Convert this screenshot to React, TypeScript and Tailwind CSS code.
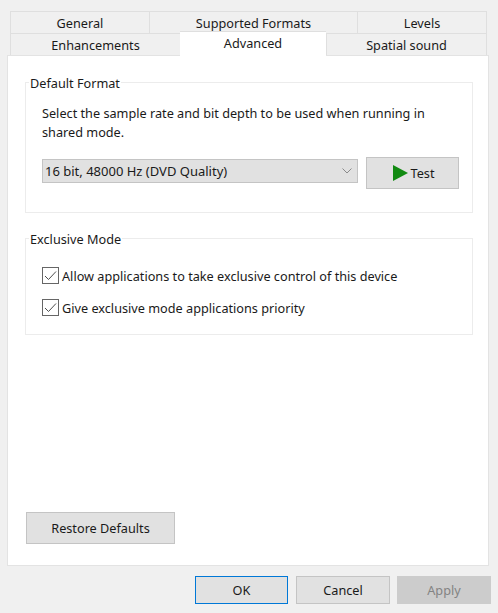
import React from "react";

const font = { fontFamily: '"Noto Sans", sans-serif' };

function Check({ label }: { label: string }) {
  return (
    <div className="flex items-center h-[17px] gap-[3px]">
      <div className="w-[17px] h-[17px] border border-[#666666] flex items-center justify-center bg-white">
        <svg width="15" height="15" viewBox="0 0 15 15" fill="none">
          <path d="M2 8 L5.5 11.5 L13 3.5" stroke="#4d4d4d" strokeWidth="1" />
        </svg>
      </div>
      <span className="whitespace-nowrap">{label}</span>
    </div>
  );
}

function Btn({ label, cls }: { label: string; cls: string }) {
  return <div className={"flex items-center justify-center " + cls}>{label}</div>;
}

export default function App() {
  return (
    <div className="w-[498px] h-[613px] bg-[#f0f0f0] text-[12.7px] leading-[18px] text-[#1a1a1a] overflow-hidden flex flex-col" style={font}>
      <div className="pt-[11px] pl-[10px] w-[487px]">
        <div className="flex h-[22px] border-t border-[#dfdfdf] border-l border-r">
          <div className="w-[139px] flex items-center justify-center border-r border-[#dfdfdf]">General</div>
          <div className="w-[208px] flex items-center justify-center border-r border-[#dfdfdf]">Supported Formats</div>
          <div className="flex-1 flex items-center justify-center">Levels</div>
        </div>
        <div className="flex h-[22px] border-t border-[#dfdfdf] border-l border-r">
          <div className="w-[169px] flex items-center justify-center">Enhancements</div>
          <div className="w-[146px] h-[25px] -mt-[3px] bg-white flex items-center justify-center border-t border-[#dfdfdf] relative pb-[2px]">Advanced</div>
          <div className="flex-1 flex items-center justify-center border-l border-[#dfdfdf]">Spatial sound</div>
        </div>
      </div>
      <div className="ml-[7px] w-[482px] h-[511px] bg-white border border-[#e3e3e3] pt-[26px] pl-[17px] pr-[16px] flex flex-col">
        <div className="relative w-[448px] h-[131px] border border-[#ececec] pt-[21px] pl-[16px]">
          <div className="absolute left-[3px] -top-[8px] bg-white px-[1px] leading-[16px]">Default Format</div>
          <div className="w-[395px] leading-[19px]">Select the sample rate and bit depth to be used when running in shared mode.</div>
          <div className="flex items-start gap-[8px] mt-[15px]">
            <div className="w-[316px] h-[24px] mt-[2px] bg-[#e1e1e1] border border-[#c4c4c4] flex items-center justify-between pl-[2px] pr-[5px]">
              <span className="text-[13px]">16 bit, 48000 Hz (DVD Quality)</span>
              <svg width="10" height="6" viewBox="0 0 10 6" fill="none">
                <path d="M0.5 0.5 L5 5 L9.5 0.5" stroke="#8a8a8a" strokeWidth="1" />
              </svg>
            </div>
            <div className="w-[93px] h-[32px] bg-[#e1e1e1] border border-[#c4c4c4] flex items-center justify-center gap-[3px] pl-[2px]">
              <svg width="15" height="16" viewBox="0 0 15 16">
                <path d="M0 0 L15 8 L0 16 Z" fill="#118a11" />
              </svg>
              <span>Test</span>
            </div>
          </div>
        </div>
        <div className="relative w-[448px] h-[97px] mt-[25px] border border-[#ececec] pt-[28px] pl-[16px] flex flex-col gap-[15px]">
          <div className="absolute left-[3px] -top-[8px] bg-white px-[1px] leading-[16px]">Exclusive Mode</div>
          <Check label="Allow applications to take exclusive control of this device" />
          <Check label="Give exclusive mode applications priority" />
        </div>
        <div className="mt-auto mb-[21px] ml-[1px]">
          <Btn label="Restore Defaults" cls="w-[149px] h-[32px] bg-[#e1e1e1] border border-[#c4c4c4]" />
        </div>
      </div>
      <div className="flex justify-end pr-[7px] mt-[10px]">
        <Btn label="OK" cls="w-[93px] h-[28px] mr-[8px] bg-[#e1e1e1] border border-[#0078d7]" />
        <Btn label="Cancel" cls="w-[94px] h-[28px] mr-[7px] bg-[#e1e1e1] border border-[#c4c4c4]" />
        <Btn label="Apply" cls="w-[94px] h-[28px] bg-[#cccccc] text-[#838383] border border-[#cccccc]" />
      </div>
    </div>
  );
}
